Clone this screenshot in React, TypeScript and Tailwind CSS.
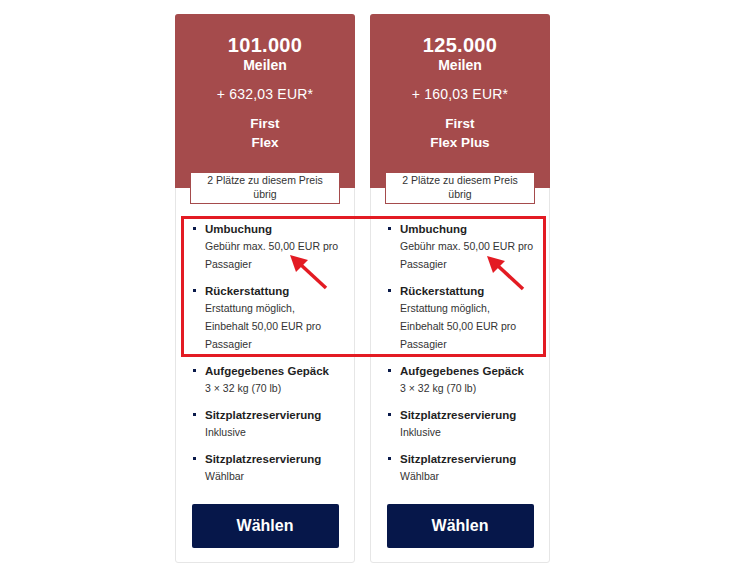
import React from "react";

type Feature = {
    title: string;
    lines: string[];
};

type Fare = {
    miles: string;
    price: string;
    cabin: string;
    fare: string;
    features: Feature[];
};

const features: Feature[] = [
    { title: "Umbuchung", lines: ["Gebühr max. 50,00 EUR pro", "Passagier"] },
    { title: "Rückerstattung", lines: ["Erstattung möglich,", "Einbehalt 50,00 EUR pro", "Passagier"] },
    { title: "Aufgegebenes Gepäck", lines: ["3 × 32 kg (70 lb)"] },
    { title: "Sitzplatzreservierung", lines: ["Inklusive"] },
    { title: "Sitzplatzreservierung", lines: ["Wählbar"] },
];

const fares: Fare[] = [
    { miles: "101.000", price: "+ 632,03 EUR*", cabin: "First", fare: "Flex", features },
    { miles: "125.000", price: "+ 160,03 EUR*", cabin: "First", fare: "Flex Plus", features },
];

function FareCard({ fare }: { fare: Fare }) {
    return (
        <div className="w-[180px] flex flex-col rounded-[3px] border border-[#e6e6e6] bg-white">
            <div className="-mx-px -mt-px rounded-t-[3px] bg-[#a54b4c] pt-[20px] pb-[36px] text-center text-white">
                <div className="text-[20px] font-bold leading-[22px] tracking-[0.3px]">{fare.miles}</div>
                <div className="mt-[1px] text-[14px] font-bold leading-[16px]">Meilen</div>
                <div className="mt-[13px] text-[14px] leading-[16px] tracking-[0.2px]">{fare.price}</div>
                <div className="mt-[12px] text-[13.5px] font-bold leading-[19px]">{fare.cabin}</div>
                <div className="text-[13.5px] font-bold leading-[19px]">{fare.fare}</div>
            </div>
            <div className="relative -mt-[16px] mx-auto w-[150px] border border-[#a54b4c] bg-white pb-[2px] text-center text-[10.5px] leading-[14px] text-[#333]">
                2 Plätze zu diesem Preis
                <br />
                übrig
            </div>
            <ul className="mt-[17px] flex flex-col gap-[10px] pl-[17px] pr-[8px]">
                {fare.features.map((f, i) => (
                    <li key={i} className="flex">
                        <span className="mt-[6px] mr-[9px] h-[3px] w-[3px] shrink-0 bg-[#0a1a4a]" />
                        <div>
                            <div className="text-[11.5px] font-bold leading-[16px] text-[#1f1f1f]">{f.title}</div>
                            {f.lines.map((l, j) => (
                                <div key={j} className="text-[10.5px] leading-[18px] text-[#333]">{l}</div>
                            ))}
                        </div>
                    </li>
                ))}
            </ul>
            <button
                type="button"
                className="mx-auto mt-[19px] mb-[14px] h-[44px] w-[147px] rounded-[2px] bg-[#06174a] text-[16px] font-bold text-white"
            >
                Wählen
            </button>
        </div>
    );
}

function Arrow({ className }: { className: string }) {
    return (
        <svg className={className} width="44" height="40" viewBox="0 0 44 40">
            <line x1="38" y1="34" x2="12" y2="10" stroke="#e31b23" strokeWidth="3.5" />
            <polygon points="2,1 20,6 8,18" fill="#e31b23" />
        </svg>
    );
}

export default function App() {
    return (
        <div className="relative min-h-[567px] bg-white pl-[175px] pt-[14px] font-['Liberation_Sans',Arial,sans-serif]">
            <div className="flex gap-[15px]">
                {fares.map((f, i) => (
                    <FareCard key={i} fare={f} />
                ))}
            </div>
            {/* annotation overlays */}
            <div className="pointer-events-none absolute left-[181px] top-[216px] h-[141px] w-[365px] border-[3.5px] border-[#e31b23]" />
            <Arrow className="pointer-events-none absolute left-[288px] top-[254px]" />
            <Arrow className="pointer-events-none absolute left-[485px] top-[255px]" />
        </div>
    );
}
